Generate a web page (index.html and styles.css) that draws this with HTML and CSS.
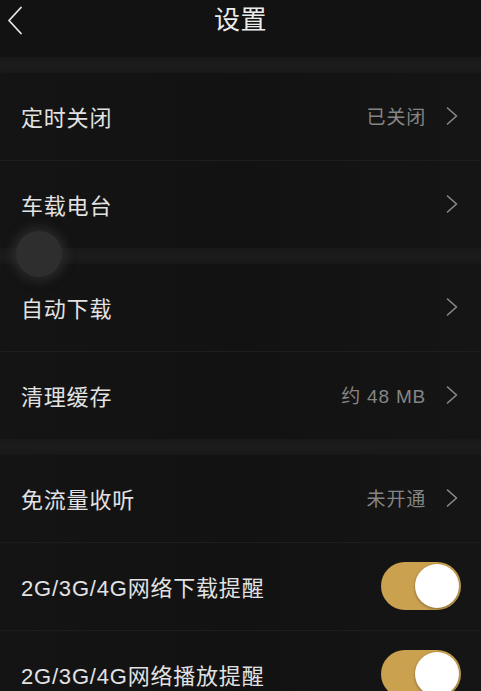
FILE: index.html
```html
<!DOCTYPE html>
<html lang="zh">
<head>
<meta charset="utf-8">
<title>设置</title>
<link rel="stylesheet" href="styles.css">
</head>
<body>
<div class="page">
  <header class="nav">
    <svg class="back" width="16" height="30" viewBox="0 0 16 30"><path d="M14 1.5 L2 14.5 L14 27.5" fill="none" stroke="#e6e6e6" stroke-width="1.8" stroke-linecap="round" stroke-linejoin="round"/></svg>
    <h1 class="title">设置</h1>
  </header>
  <div class="gap"></div>
  <section class="group">
    <div class="row"><span class="label">定时关闭</span><span class="right"><span class="value">已关闭</span><svg class="chev" width="12" height="18" viewBox="0 0 12 18"><path d="M1.5 1 L10.5 9 L1.5 17" fill="none" stroke="#8a8a8a" stroke-width="1.6" stroke-linecap="round" stroke-linejoin="round"/></svg></span></div>
    <div class="row"><span class="label">车载电台</span><span class="right"><svg class="chev" width="12" height="18" viewBox="0 0 12 18"><path d="M1.5 1 L10.5 9 L1.5 17" fill="none" stroke="#8a8a8a" stroke-width="1.6" stroke-linecap="round" stroke-linejoin="round"/></svg></span></div>
  </section>
  <div class="gap"></div>
  <section class="group">
    <div class="row"><span class="label">自动下载</span><span class="right"><svg class="chev" width="12" height="18" viewBox="0 0 12 18"><path d="M1.5 1 L10.5 9 L1.5 17" fill="none" stroke="#8a8a8a" stroke-width="1.6" stroke-linecap="round" stroke-linejoin="round"/></svg></span></div>
    <div class="row"><span class="label">清理缓存</span><span class="right"><span class="value">约 48 MB</span><svg class="chev" width="12" height="18" viewBox="0 0 12 18"><path d="M1.5 1 L10.5 9 L1.5 17" fill="none" stroke="#8a8a8a" stroke-width="1.6" stroke-linecap="round" stroke-linejoin="round"/></svg></span></div>
  </section>
  <div class="gap"></div>
  <section class="group">
    <div class="row"><span class="label">免流量收听</span><span class="right"><span class="value">未开通</span><svg class="chev" width="12" height="18" viewBox="0 0 12 18"><path d="M1.5 1 L10.5 9 L1.5 17" fill="none" stroke="#8a8a8a" stroke-width="1.6" stroke-linecap="round" stroke-linejoin="round"/></svg></span></div>
    <div class="row"><span class="label">2G/3G/4G网络下载提醒</span><span class="toggle"><span class="knob"></span></span></div>
    <div class="row"><span class="label">2G/3G/4G网络播放提醒</span><span class="toggle"><span class="knob"></span></span></div>
  </section>
  <div class="assist"></div>
</div>
</body>
</html>
```

FILE: styles.css
```css
html, body {
  margin: 0;
  padding: 0;
  background: #131313;
  overflow: hidden;
}
.page {
  position: relative;
  width: 481px;
  height: 691px;
  overflow: hidden;
  background: linear-gradient(90deg, #141414 0%, #121212 50%, #151515 100%);
  font-family: "Liberation Sans", "Noto Sans CJK SC", sans-serif;
  color: #e6e6e6;
}
.nav {
  position: relative;
  height: 57px;
  display: flex;
  align-items: flex-start;
  justify-content: center;
  background: #121212;
}
.back {
  position: absolute;
  left: 7px;
  top: 6px;
}
.title {
  margin: 0;
  padding-top: 3px;
  font-size: 26px;
  line-height: 34px;
  font-weight: 400;
  color: #ececec;
  letter-spacing: 0.5px;
}
.gap {
  height: 16px;
  background: linear-gradient(180deg, #191919 0%, #1c1c1c 50%, #181818 100%);
}
.group {
  display: flex;
  flex-direction: column;
}
.row {
  height: 85px;
  display: flex;
  align-items: center;
  justify-content: space-between;
  padding: 0 20px 2px 21px;
  border-bottom: 1px solid #1d1d1d;
}
.group .row:last-child {
  border-bottom: none;
}
.label {
  font-size: 22px;
  color: #e2e2e2;
  letter-spacing: 0.8px;
}
.right {
  display: flex;
  align-items: center;
  gap: 20px;
  padding-right: 3px;
}
.value {
  font-size: 19px;
  color: #858585;
  letter-spacing: 0.8px;
}
.toggle {
  width: 80px;
  height: 48px;
  border-radius: 24px;
  background: #c9a14f;
  display: flex;
  align-items: center;
  justify-content: flex-end;
  padding-right: 2px;
  box-sizing: border-box;
}
.knob {
  width: 44px;
  height: 44px;
  border-radius: 50%;
  background: #ffffff;
  box-shadow: 0 1px 3px rgba(0,0,0,0.35);
}
.assist {
  position: absolute;
  left: 16px;
  top: 231px;
  width: 46px;
  height: 46px;
  border-radius: 50%;
  background: #2e2e2e;
  box-shadow: 0 0 8px 5px rgba(50,50,50,0.6);
}
```
